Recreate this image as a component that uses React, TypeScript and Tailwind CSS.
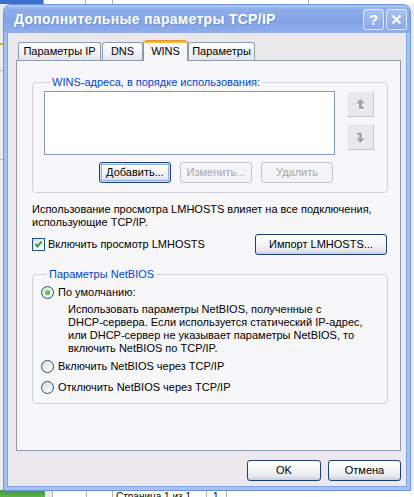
import React from 'react';

const ui = "font-['Liberation_Sans',Arial,sans-serif] text-[11px] leading-[13px]";

function XpButton({
  children,
  width,
  disabled,
  focused,
}: {
  children: React.ReactNode;
  width: string;
  disabled?: boolean;
  focused?: boolean;
}) {
  const look = disabled
    ? 'border-[#c5c5cb] text-[#a7a6aa] bg-[#f4f4f6]'
    : 'border-[#1d3f78] text-black bg-[linear-gradient(180deg,#ffffff_0%,#f6f6f8_45%,#e6e8ee_80%,#c9cddb_100%)]';
  const ring = focused ? 'shadow-[inset_0_0_0_1px_#d2e4fb,inset_0_0_0_2px_#8fb0e6]' : '';
  return (
    <div className={`${width} h-[21px] flex items-center justify-center rounded-[3px] border ${look} ${ring}`}>
      {children}
    </div>
  );
}

function ArrowButton({ down }: { down?: boolean }) {
  const pts = down
    ? '4.5,11 0,6.5 3,6.5 3,3 1,3 1,1 6,1 6,6.5 9,6.5'
    : '4.5,0 9,4.5 6,4.5 6,8 8,8 8,10 3,10 3,4.5 0,4.5';
  return (
    <div className="w-[27px] h-[26px] flex items-center justify-center border border-t-[#f4f4f6] border-l-[#f4f4f6] border-r-[#c6c6cc] border-b-[#c6c6cc] bg-[#e9e9ec]">
      <svg width="11" height="13" viewBox="-1 -1 11 13">
        <polygon points={pts} fill="#ffffff" transform="translate(1,1)" />
        <polygon points={pts} fill="#a5a5a9" />
      </svg>
    </div>
  );
}

function Radio({ checked }: { checked?: boolean }) {
  return (
    <div className="w-[13px] h-[13px] rounded-full border border-[#1c5180] bg-[linear-gradient(135deg,#dcdcd7,#ffffff)] flex items-center justify-center shrink-0">
      {checked && (
        <div className="w-[5px] h-[5px] rounded-full bg-[radial-gradient(circle_at_35%_35%,#7be07a,#1a9a1a)]" />
      )}
    </div>
  );
}

function Checkbox() {
  return (
    <div className="w-[13px] h-[13px] border border-[#1c5180] bg-[linear-gradient(135deg,#dcdcd7,#ffffff)] flex items-center justify-center shrink-0">
      <svg width="9" height="9" viewBox="0 0 9 9">
        <polyline points="1.5,4 3.5,6.5 7.5,1.5" fill="none" stroke="#21a121" strokeWidth="2" />
      </svg>
    </div>
  );
}

function Tab({ label, width, active }: { label: string; width: string; active?: boolean }) {
  if (active) {
    return (
      <div
        className={`${width} h-[21px] -mb-px relative z-10 flex flex-col rounded-t-[3px] border-x border-[#8d9bb0] bg-[#f7f7fa] overflow-hidden`}
      >
        <div className="h-[3px] bg-[linear-gradient(180deg,#e68b2c,#ffc73c)] rounded-t-[3px]" />
        <div className="flex-1 flex items-center justify-center pb-[2px]">{label}</div>
      </div>
    );
  }
  return (
    <div
      className={`${width} h-[18px] flex items-center justify-center rounded-t-[3px] border-x border-t border-[#8d9bb0] bg-[linear-gradient(180deg,#ffffff,#f1f1f4_60%,#e3e4ec)]`}
    >
      {label}
    </div>
  );
}

export default function App() {
  return (
    <div className={`relative w-[414px] h-[497px] overflow-hidden bg-[#ececee] ${ui}`}>
      {/* what lies behind the dialog */}
      <div className="absolute left-0 top-0 w-[43px] h-[4px] bg-[#3a6dcc]" />
      <div className="absolute left-[43px] top-0 w-[371px] h-[4px] bg-white border-l border-[#a9a9b0]" />
      <div className="absolute left-[85px] top-0 w-px h-[4px] bg-[#b0b0b6]" />
      <div className="absolute left-[112px] top-0 w-px h-[4px] bg-[#b0b0b6]" />
      <div className="absolute left-[308px] top-0 w-px h-[4px] bg-[#b0b0b6]" />
      <div className="absolute left-0 top-[43px] w-[3px] h-[2px] bg-[#f0a030]" />
      <div className="absolute left-0 top-[70px] w-[3px] h-[90px] border-y border-[#b8b8c0]" />
      <div className="absolute left-0 top-[490px] w-[45px] h-[7px] bg-[linear-gradient(180deg,#3f9a3a,#62b050)]" />
      <div className="absolute left-[52px] top-[490px] w-[362px] h-[7px] bg-white border-l border-[#b0b0b6]" />
      <div className="absolute left-[86px] top-[490px] w-px h-[7px] bg-[#b0b0b6]" />
      <div className="absolute left-[112px] top-[490px] w-px h-[7px] bg-[#b0b0b6]" />
      <div className="absolute left-[206px] top-[490px] w-px h-[7px] bg-[#b0b0b6]" />
      <div className="absolute left-[226px] top-[490px] w-px h-[7px] bg-[#b0b0b6]" />
      <div className="absolute left-[116px] top-[491px] text-[10px] leading-[12px] text-black">Страница 1 из 1</div>
      <div className="absolute left-[213px] top-[491px] text-[10px] leading-[12px] text-black">1</div>

      {/* dialog window */}
      <div className="absolute left-[3px] top-[4px] w-[408px] h-[487px] flex flex-col rounded-t-[8px] border border-[#6b94dc] bg-[#a6c2f2] overflow-hidden">
        {/* title bar */}
        <div className="h-[28px] shrink-0 flex items-center pl-[10px] pr-[3px] bg-[linear-gradient(180deg,#b0caf6_0%,#8eaeea_15%,#82a3e6_60%,#90afea_100%)]">
          <span className="flex-1 font-['Liberation_Sans',Arial,sans-serif] font-bold text-[14px] tracking-[0.3px] text-white [text-shadow:1px_1px_0_#6f8fd2]">
            Дополнительные параметры TCP/IP
          </span>
          <div className="flex gap-[2px]">
            <div className="w-[21px] h-[21px] rounded-[3px] border border-[#e3ebfb] bg-[linear-gradient(180deg,#a9c2f2,#8aa8e6)] flex items-center justify-center text-white font-bold text-[15px] leading-none">
              ?
            </div>
            <div className="w-[21px] h-[21px] rounded-[3px] border border-[#e3ebfb] bg-[linear-gradient(180deg,#a9c2f2,#8aa8e6)] flex items-center justify-center">
              <svg width="11" height="11" viewBox="0 0 11 11">
                <path d="M1.5 1.5 L9.5 9.5 M9.5 1.5 L1.5 9.5" stroke="#ffffff" strokeWidth="2" />
              </svg>
            </div>
          </div>
        </div>

        {/* client area */}
        <div className="flex-1 px-[3px] pb-[3px]">
          <div className="h-full border-x border-b border-[#7ea2e4] bg-[#ebe9ed] flex flex-col">
            {/* tabs */}
            <div className="mt-[7px] h-[20px] flex items-end pl-[10px]">
              <Tab label="Параметры IP" width="w-[83px]" />
              <div className="w-px" />
              <Tab label="DNS" width="w-[41px]" />
              <Tab label="WINS" width="w-[45px]" active />
              <Tab label="Параметры" width="w-[67px]" />
            </div>

            {/* tab page */}
            <div className="ml-[8px] w-[385px] h-[391px] border border-[#8d9bb0] bg-[#f7f7fa] flex flex-col">
              <fieldset className="mt-[15px] ml-[15px] w-[356px] border border-[#d0d0d6] rounded-[4px] pl-[11px] pt-[2px] pb-[9px]">
                <legend className="ml-[6px] px-[2px] text-[#0046d5]">WINS-адреса, в порядке использования:</legend>
                <div className="flex">
                  <div className="w-[291px] h-[64px] border border-[#7f9db9] bg-white" />
                  <div className="ml-[12px] flex flex-col gap-[7px]">
                    <ArrowButton />
                    <ArrowButton down />
                  </div>
                </div>
                <div className="mt-[7px] ml-[55px] flex gap-[9px]">
                  <XpButton width="w-[72px]" focused>
                    Добавить...
                  </XpButton>
                  <XpButton width="w-[72px]" disabled>
                    Изменить...
                  </XpButton>
                  <XpButton width="w-[72px]" disabled>
                    Удалить
                  </XpButton>
                </div>
              </fieldset>

              <p className="mt-[10px] ml-[15px] text-black">
                Использование просмотра LMHOSTS влияет на все подключения,
                <br />
                использующие TCP/IP.
              </p>

              <div className="mt-[5px] ml-[15px] w-[355px] flex items-center">
                <Checkbox />
                <span className="ml-[3px] flex-1">Включить просмотр LMHOSTS</span>
                <XpButton width="w-[132px]">Импорт LMHOSTS...</XpButton>
              </div>

              <fieldset className="mt-[13px] ml-[15px] w-[356px] border border-[#d0d0d6] rounded-[4px] pl-[8px] pt-[5px] pb-[9px]">
                <legend className="ml-[6px] px-[2px] text-[#0046d5]">Параметры NetBIOS</legend>
                <div className="flex items-center gap-[4px]">
                  <Radio checked />
                  <span>По умолчанию:</span>
                </div>
                <p className="mt-[4px] pl-[27px]">
                  Использовать параметры NetBIOS, полученные с
                  <br />
                  DHCP-сервера. Если используется статический IP-адрес,
                  <br />
                  или DHCP-сервер не указывает параметры NetBIOS, то
                  <br />
                  включить NetBIOS по TCP/IP.
                </p>
                <div className="mt-[5px] flex items-center gap-[4px]">
                  <Radio />
                  <span>Включить NetBIOS через TCP/IP</span>
                </div>
                <div className="mt-[8px] flex items-center gap-[4px]">
                  <Radio />
                  <span>Отключить NetBIOS через TCP/IP</span>
                </div>
              </fieldset>
            </div>

            {/* dialog buttons */}
            <div className="mt-[9px] ml-[239px] flex gap-[7px]">
              <XpButton width="w-[74px]">OK</XpButton>
              <XpButton width="w-[73px]">Отмена</XpButton>
            </div>
          </div>
        </div>
      </div>
    </div>
  );
}
